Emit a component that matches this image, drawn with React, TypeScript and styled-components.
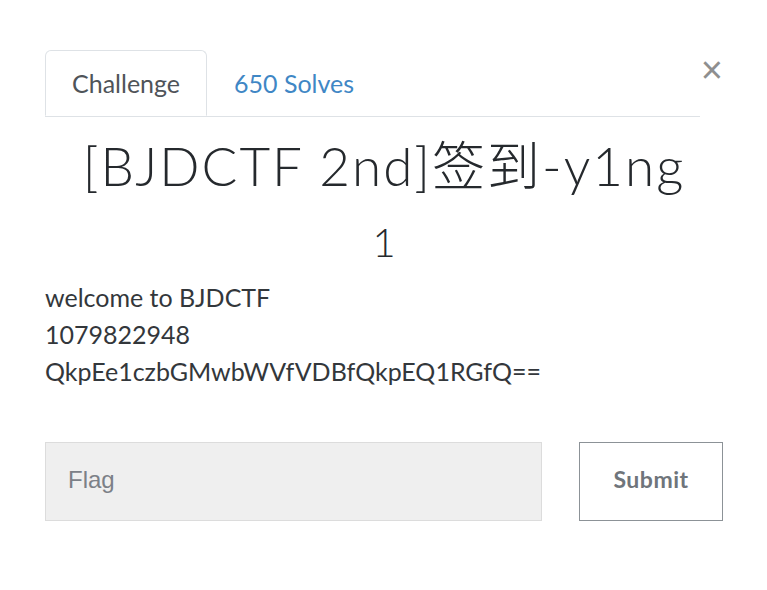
import React from "react";
import styled, { createGlobalStyle } from "styled-components";

const Global = createGlobalStyle`
  html, body { margin: 0; padding: 0; background: #fff; }
  body { font-family: "Lato", "Noto Sans", sans-serif; color: #2b2f33; }
  * { box-sizing: border-box; }
`;

const Modal = styled.div`
  width: 767px;
  padding: 50px 44px 60px 45px;
`;

const Header = styled.div`
  display: flex;
  align-items: flex-start;
`;

const Nav = styled.div`
  flex: 1;
  display: flex;
  border-bottom: 1px solid #dee2e6;
`;

const Tab = styled.div<{ $active?: boolean }>`
  height: 66px;
  padding: 0 26px;
  display: flex;
  align-items: center;
  font-size: 25px;
  margin-bottom: ${(p) => (p.$active ? "-1px" : "0")};
  border: 1px solid ${(p) => (p.$active ? "#dee2e6" : "transparent")};
  border-bottom-color: ${(p) => (p.$active ? "#fff" : "transparent")};
  border-radius: 6px 6px 0 0;
  color: ${(p) => (p.$active ? "#4f5459" : "#3f87c5")};
  background: ${(p) => (p.$active ? "#fff" : "transparent")};
`;

const Close = styled.div`
  width: 23px;
  padding-top: 5px;
  text-align: right;
  font-family: "Liberation Sans", sans-serif;
  font-size: 38px;
  line-height: 30px;
  font-weight: 400;
  color: #8f8f8f;
`;

const Title = styled.h2`
  margin: 18px 0 0;
  text-align: center;
  font-family: "Lato", "Noto Sans CJK SC", sans-serif;
  font-weight: 300;
  font-size: 53px;
  letter-spacing: 2px;
  line-height: 62px;
  color: #25292d;
`;

const Value = styled.h3`
  margin: 17px 0 0;
  text-align: center;
  font-family: "Lato", sans-serif;
  font-weight: 300;
  font-size: 40px;
  line-height: 56px;
  color: #25292d;
`;

const Description = styled.div`
  margin-top: 9px;
  font-size: 25px;
  line-height: 37px;
  color: #33373b;
`;

const Form = styled.div`
  margin-top: 52px;
  display: flex;
  gap: 37px;
`;

const Input = styled.input`
  flex: 1;
  height: 79px;
  padding: 0 22px 3px;
  background: #efefef;
  border: 1px solid #dcdcdc;
  font-family: "Liberation Sans", sans-serif;
  font-size: 24px;
  color: #333;
  outline: none;
  &::placeholder { color: #7c8087; }
`;

const Button = styled.button`
  width: 144px;
  height: 79px;
  padding: 0 0 6px;
  background: #fff;
  border: 1px solid #8c9297;
  font-family: "Lato", sans-serif;
  font-weight: 700;
  font-size: 23px;
  letter-spacing: 0.5px;
  color: #6f757b;
`;

export default function App() {
  return (
    <Modal>
      <Global />
      <Header>
        <Nav>
          <Tab $active>Challenge</Tab>
          <Tab>650 Solves</Tab>
        </Nav>
        <Close>×</Close>
      </Header>
      <Title>[BJDCTF 2nd]签到-y1ng</Title>
      <Value>1</Value>
      <Description>
        welcome to BJDCTF
        <br />
        1079822948
        <br />
        QkpEe1czbGMwbWVfVDBfQkpEQ1RGfQ==
      </Description>
      <Form>
        <Input placeholder="Flag" />
        <Button>Submit</Button>
      </Form>
    </Modal>
  );
}
